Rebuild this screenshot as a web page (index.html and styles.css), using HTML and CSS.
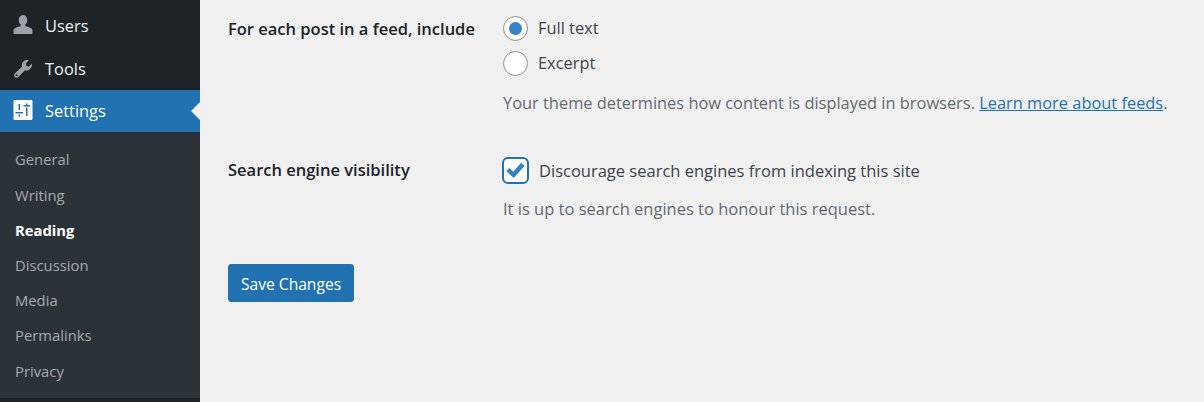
FILE: index.html
```html
<!DOCTYPE html>
<html lang="en">
  <head>
    <meta charset="UTF-8" />
    <title>Reading Settings</title>
    <link rel="stylesheet" href="styles.css">
  </head>
  <body>
    <div class="admin">
      <!-- sidebar -->
      <nav class="sidebar">
        <a class="menu-item">
          <svg class="menu-icon" viewBox="0 0 20 20"><path d="M10 0c-2.600 0-4.300 2.200-4.300 4.900 0 1.900.8 3.500 2 4.600v1.700C4.600 11.900.5 13 .5 15.200c0 1.500.2 3.800.2 3.800h18.600s.2-2.300.2-3.800c0-2.200-4.100-3.300-7.200-4V9.500c1.200-1.100 2-2.700 2-4.600C14.300 2.200 12.600 0 10 0z"/></svg>
          <span>Users</span>
        </a>
        <a class="menu-item tools">
          <svg class="menu-icon" viewBox="0 0 20 20"><path d="M19 4.600l-3 3-2.600-.6-.6-2.600 3-3c-2-.7-4.300-.2-5.600 1.300-1.300 1.300-1.800 3.200-1.300 5L1.800 14.400c-1 1-1 2.600 0 3.500 1 1 2.500 1 3.500 0l6.700-6.700c1.800.5 3.700 0 5-1.300 1.500-1.300 2.400-3.400 2-5.300zM3.600 17.300a1 1 0 1 1 0-2 1 1 0 0 1 0 2z"/></svg>
          <span>Tools</span>
        </a>
        <a class="menu-item current">
          <svg class="menu-icon" viewBox="0 0 20 20">
            <rect x="0.500" width="19" height="20" rx="1" />
            <path class="sliders" d="M5.500 4h1.500v6h-1.500zM5.500 14.500h1.500v2h-1.500zM2.500 12h7.500v1.500H2.500zM13 3.500h1.500v1.500H13zM13 7.500h1.500V16H13zM10.500 5h6.500v1.500h-6.500z"/>
          </svg>
          <span>Settings</span>
        </a>
        <ul class="submenu">
          <li>General</li>
          <li>Writing</li>
          <li class="active">Reading</li>
          <li>Discussion</li>
          <li>Media</li>
          <li>Permalinks</li>
          <li>Privacy</li>
        </ul>
      </nav>

      <!-- settings form -->
      <main class="content">
        <div class="row feed-row">
          <div class="row-label">For each post in a feed, include</div>
          <div class="row-field">
            <label class="option">
              <span class="radio checked"></span>
              <span class="option-text">Full text</span>
            </label>
            <label class="option">
              <span class="radio"></span>
              <span class="option-text">Excerpt</span>
            </label>
            <p class="hint">Your theme determines how content is displayed in browsers. <a class="link">Learn more about feeds</a>.</p>
          </div>
        </div>
        <div class="row visibility-row">
          <div class="row-label">Search engine visibility</div>
          <div class="row-field">
            <label class="option">
              <span class="checkbox">
                <svg viewBox="0 0 20 20"><path d="M2 10.500l2.800-2.700 3.200 3.200 6.800-7.800 3.200 2.600-9.600 10.700z"/></svg>
              </span>
              <span class="option-text">Discourage search engines from indexing this site</span>
            </label>
            <p class="hint">It is up to search engines to honour this request.</p>
          </div>
        </div>
        <button class="save">Save Changes</button>
      </main>
    </div>
  </body>
</html>
```

FILE: styles.css
```css
html,
body {
  margin: 0;
  height: 402px;
  overflow: hidden;
}

body {
  font-family: "Open Sans", "Noto Sans", sans-serif;
  font-size: 16.400px;
  background-color: #f0f0f1;
  color: #3c434a;
}

.admin {
  display: flex;
  height: 402px;
}

.sidebar {
  width: 200px;
  flex-shrink: 0;
  padding-top: 5px;
  background-color: #1d2327;
  color: #f0f0f1;
}

.menu-item {
  display: flex;
  align-items: center;
  height: 42.500px;
  padding: 0 0 2px 13px;
  gap: 12px;
  position: relative;
  box-sizing: border-box;
}

.menu-item.tools {
  padding-bottom: 0;
}

.menu-icon {
  width: 20px;
  height: 20px;
  fill: #9ca2a7;
}

.menu-item.current {
  height: 42px;
  background-color: #2271b1;
  color: #fff;
}

.menu-item.current .menu-icon {
  fill: #fff;
}

.menu-item.current .sliders {
  fill: #2271b1;
}

.menu-item.current::after {
  content: "";
  position: absolute;
  right: 0;
  top: 12px;
  border: 9px solid transparent;
  border-right-color: #f0f0f1;
  border-left-width: 0;
}

.submenu {
  list-style: none;
  margin: 0;
  padding: 10.450px 0 9px;
  background-color: #2c3338;
  font-size: 14.800px;
  color: #a7aaad;
}

.submenu li {
  height: 35.200px;
  line-height: 35.200px;
  padding-left: 15px;
}

.submenu li.active {
  color: #fff;
  font-weight: 700;
}

.content {
  flex: 1;
  padding: 11px 0 0 28px;
}

.row {
  display: flex;
}

.row-label {
  width: 275px;
  flex-shrink: 0;
  font-size: 16.500px;
  font-weight: 600;
  color: #1d2327;
  line-height: 36px;
}

.row-field {
  flex: 1;
}

.option {
  display: flex;
  align-items: center;
  gap: 10px;
  height: 35px;
}

.option-text {
  padding-bottom: 2px;
}

.radio {
  width: 25px;
  height: 25px;
  box-sizing: border-box;
  border: 1px solid #8c8f94;
  border-radius: 50%;
  background-color: #fff;
  display: flex;
  align-items: center;
  justify-content: center;
}

.radio.checked::before {
  content: "";
  width: 13px;
  height: 13px;
  border-radius: 50%;
  background-color: #3582c4;
}

.checkbox {
  width: 27px;
  height: 27px;
  margin: 0 0 2px -1px;
  box-sizing: border-box;
  border: 2px solid #2271b1;
  border-radius: 6px;
  background-color: #fff;
  display: flex;
  align-items: center;
  justify-content: center;
}

.checkbox svg {
  width: 23px;
  height: 23px;
  fill: #3582c4;
}

.hint {
  margin: 9px 0 0;
  color: #646970;
  line-height: 26px;
}

.link {
  color: #2271b1;
  text-decoration: underline;
}

.visibility-row {
  margin-top: 37.500px;
  font-size: 16.500px;
}

.visibility-row .row-label {
  line-height: 32px;
}

.visibility-row .hint {
  margin-top: 7.500px;
}

.save {
  display: block;
  margin-top: 42px;
  height: 38px;
  padding: 1px 12px 0;
  border: 1px solid #2271b1;
  border-radius: 3px;
  background-color: #2271b1;
  color: #fff;
  font-family: inherit;
  font-size: 15.600px;
}
```
